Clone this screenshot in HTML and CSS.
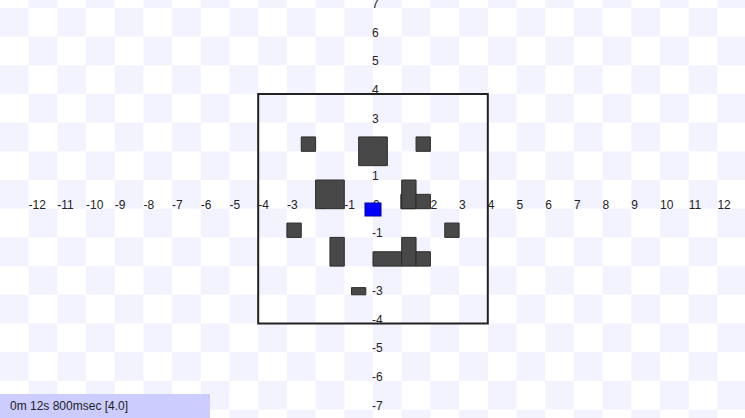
FILE: index.html
```html
<!DOCTYPE html>
<html lang="en">
<head>
  <meta charset="UTF-8">
  <meta name="viewport" content="width=device-width, initial-scale=1.0">
  <title>Field</title>
  <link rel="stylesheet" href="styles.css">
</head>
<body>
  <main class="stage">
    <svg class="field" width="745" height="418" viewBox="0 0 745 418">
      <defs>
        <pattern id="checker" patternUnits="userSpaceOnUse" x="373" y="208.7" width="57.4" height="57.4">
          <rect class="tile" x="0" y="0" width="28.7" height="28.7"/>
          <rect class="tile" x="28.7" y="28.7" width="28.7" height="28.7"/>
        </pattern>
      </defs>
      <rect x="0" y="0" width="745" height="418" fill="url(#checker)"/>

      <g class="labels" id="labels"></g>

      <!-- world units, y up -->
      <g transform="translate(373 208.7) scale(28.7 -28.7)">
        <rect class="bound" x="-4" y="-4" width="8" height="8"/>
        <g class="blocks" id="blocks"></g>
      </g>

      <rect class="player" x="365" y="203" width="16" height="13"/>
    </svg>
    <div class="status">0m 12s 800msec [4.0]</div>
  </main>
<script>
const NS = 'http://www.w3.org/2000/svg';
const cx = 373, cy = 208.7, unit = 28.7;

// x, y (bottom), w, h
const blocks = [
  [-2.5, 2, 0.5, 0.5],
  [-0.5, 1.5, 1, 1],
  [1.5, 2, 0.5, 0.5],
  [-2, 0, 1, 1],
  [0.97, 0, 0.5, 0.5],
  [1, 0, 0.5, 1],
  [1.5, 0, 0.5, 0.5],
  [-3, -1, 0.5, 0.5],
  [-1.5, -2, 0.5, 1],
  [0, -2, 1, 0.5],
  [1, -2, 0.5, 1],
  [1.5, -2, 0.5, 0.5],
  [2.5, -1, 0.5, 0.5],
  [-0.75, -3, 0.5, 0.25]
];

const g = document.getElementById('blocks');
blocks.forEach(([x, y, w, h]) => {
  const r = document.createElementNS(NS, 'rect');
  r.setAttribute('x', x);
  r.setAttribute('y', y);
  r.setAttribute('width', w);
  r.setAttribute('height', h);
  g.appendChild(r);
});

const labels = document.getElementById('labels');
function label(x, y, str) {
  const t = document.createElementNS(NS, 'text');
  t.setAttribute('x', x);
  t.setAttribute('y', y);
  t.textContent = str;
  labels.appendChild(t);
}
for (let i = -12; i <= 12; i++) label(cx + i * unit, cy, i);
for (let j = -7; j <= 7; j++) if (j != 0) label(cx - 1, cy - j * unit, j);
</script>
</body>
</html>
```

FILE: styles.css
```css
html, body {
  margin: 0;
  padding: 0;
  overflow: hidden;
  background: #fff;
  font-family: "Liberation Sans", Arial, sans-serif;
}
.stage {
  position: relative;
  width: 745px;
  height: 418px;
}
.field {
  display: block;
}
.tile {
  fill: #f3f3ff;
}
.labels text {
  font-family: "Liberation Sans", Arial, sans-serif;
  font-size: 12px;
  fill: #222;
}
.bound {
  fill: none;
  stroke: #222;
  stroke-width: 2px;
  vector-effect: non-scaling-stroke;
}
.blocks rect {
  fill: #484848;
  stroke: #2c2c2c;
  stroke-width: 1px;
  vector-effect: non-scaling-stroke;
}
.player {
  fill: #0000ff;
  stroke: #0000a8;
  stroke-width: 1px;
}
.status {
  position: absolute;
  left: 0;
  bottom: 0;
  width: 200px;
  height: 24px;
  padding-left: 10px;
  line-height: 24px;
  font-size: 12px;
  color: #222;
  background: #ccccff;
}
```
